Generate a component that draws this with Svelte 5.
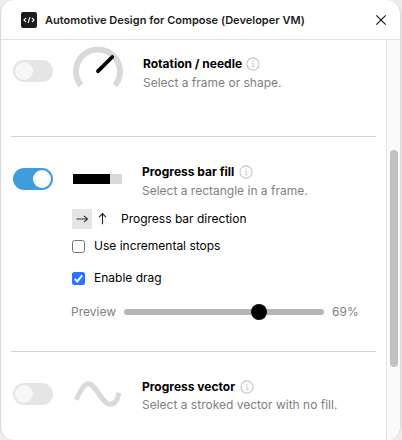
<script>
  let stops = $state(false);
  let drag = $state(true);
  let preview = $state(69);
</script>

{#snippet info()}
  <svg class="info" width="14" height="14" viewBox="0 0 14 14" fill="none">
    <circle cx="7" cy="7" r="6.1" stroke="#c6c6c6" stroke-width="1.1" />
    <path d="M5.8 6.5h1.4v3.3M5.7 9.8h2.8" stroke="#c6c6c6" stroke-width="0.9" />
    <rect x="6.4" y="3.7" width="1.2" height="1.2" fill="#c6c6c6" />
  </svg>
{/snippet}

<main class="window">
  <header>
    <svg class="logo" width="16" height="16" viewBox="0 0 16 16" fill="none">
      <rect width="16" height="16" rx="2" fill="#1c1c1c" />
      <path d="M5.1 5.8 2.9 8l2.2 2.2M10.9 5.8 13.1 8l-2.2 2.2M8.9 5.2 7.1 10.8" stroke="#fff" stroke-width="1.1" />
    </svg>
    <h1>Automotive Design for Compose (Developer VM)</h1>
    <svg class="close" width="12" height="12" viewBox="0 0 12 12" fill="none">
      <path d="m1.3 1.3 9.4 9.4m0-9.4-9.4 9.4" stroke="#111" stroke-width="1.15" />
    </svg>
  </header>
  <div class="body">
    <div class="content">
      <section class="rotation">
        <div class="toggle"><span></span></div>
        <svg class="art" width="52" height="44" viewBox="0 0 52 44" fill="none">
          <path d="M9 39.4A22 22 0 1 1 43 39.4" stroke="#d9d9d9" stroke-width="6" />
          <path d="M26 25.2 40.3 11" stroke="#000" stroke-width="3.8" stroke-linecap="round" />
        </svg>
        <div class="copy">
          <h2>Rotation / needle{@render info()}</h2>
          <p>Select a frame or shape.</p>
        </div>
      </section>
      <section class="progress">
        <div class="top">
          <div class="toggle on"><span></span></div>
          <div class="bar"><i></i></div>
          <div class="copy">
            <h2>Progress bar fill{@render info()}</h2>
            <p>Select a rectangle in a frame.</p>
          </div>
        </div>
        <div class="direction">
          <span class="right">
            <svg width="20" height="20" viewBox="0 0 20 20" fill="none"><path d="M4.5 10h11M12 6.8l3.5 3.2-3.5 3.2" stroke="#333" stroke-width="1.1" /></svg>
          </span>
          <svg class="up" width="20" height="20" viewBox="0 0 20 20" fill="none"><path d="M10.5 15.2V4.7M7.1 8.1l3.4-3.5 3.4 3.5" stroke="#222" stroke-width="1.1" /></svg>
          <span class="label">Progress bar direction</span>
        </div>
        <label class="stops"><input type="checkbox" bind:checked={stops} /><span class="box"></span>Use incremental stops</label>
        <label class="drag"><input type="checkbox" bind:checked={drag} /><span class="box"><svg width="13" height="13" viewBox="0 0 13 13" fill="none"><path d="m2.7 6.9 2.5 2.5 5-6" stroke="#fff" stroke-width="2" /></svg></span>Enable drag</label>
        <div class="preview">
          <span class="name">Preview</span>
          <div class="slider"><b style="left: {(preview / 100) * 184 - 0.2}px"></b></div>
          <span class="value">{preview}%</span>
        </div>
      </section>
      <section class="vector">
        <div class="toggle"><span></span></div>
        <svg class="art" width="52" height="30" viewBox="0 0 52 30" fill="none">
          <path d="M4.3 20.9C8 12 12.2 4.7 16.3 4.7C24 4.7 29.5 25.2 38.5 25.2C43 25.2 45.8 20 46.9 13.8" stroke="#d9d9d9" stroke-width="5" />
        </svg>
        <div class="copy">
          <h2>Progress vector{@render info()}</h2>
          <p>Select a stroked vector with no fill.</p>
        </div>
      </section>
    </div>
    <div class="track"><div class="thumb"></div></div>
  </div>
</main>

<style>
  :global(body) { margin: 0; background: #ececec; overflow: hidden; }
  * { box-sizing: border-box; }
  .window {
    width: 401px; height: 440px; border: solid #d8d8d8; border-width: 0 1px;
    border-radius: 14px; overflow: hidden; background: #fff; color: #000;
    font: 12px/16px Inter, sans-serif; display: flex; flex-direction: column;
  }
  header { height: 40px; flex: none; display: flex; align-items: center; border-bottom: 1px solid #e2e2e2; padding: 1px 13px 0 20px; }
  h1 { margin: 0 0 0 8px; flex: 1; font-size: 11px; line-height: 16px; font-weight: 600; color: #1c1c1c; white-space: nowrap; letter-spacing: 0.02px; }
  .body { flex: 1; display: flex; min-height: 0; }
  .content { flex: 1; padding: 0 10px; overflow: hidden; }
  .track { width: 14px; border-left: 1px solid #e5e5e5; background: #fafafa; padding: 110px 2px 0 3px; }
  .thumb { width: 8px; height: 217px; border-radius: 4px; background: #c1c1c1; }
  section { padding-left: 2px; }
  .rotation, .vector, .top { display: flex; align-items: flex-start; }
  .rotation { height: 97px; border-bottom: 1px solid #d4d4d4; }
  .toggle { width: 40px; height: 22px; border-radius: 11px; padding: 2px; background: #e5e5e5; flex: none; }
  .toggle span { display: block; width: 18px; height: 18px; border-radius: 50%; background: #f7f7f7; }
  .toggle.on { background: #409ddd; }
  .toggle.on span { background: #fff; margin-left: 18px; }
  .rotation .toggle { margin-top: 20px; }
  .rotation .art { margin: 6px 0 0 19px; }
  .copy { white-space: nowrap; }
  .rotation .copy { margin: 15px 0 0 19px; }
  h2 { margin: 0; height: 17px; font-size: 12px; line-height: 17px; font-weight: 700; display: flex; align-items: center; gap: 5px; }
  .rotation h2 { gap: 4px; }
  p { margin: 2px 0 0; height: 17px; line-height: 17px; color: #808080; }
  .progress { height: 215px; border-bottom: 1px solid #d4d4d4; padding-top: 26px; }
  .top { height: 46px; }
  .progress .toggle { margin-top: 5px; }
  .bar { width: 49px; height: 10px; margin: 11px 0 0 20px; background: #d9d9d9; }
  .bar i { display: block; width: 37px; height: 10px; background: #000; }
  .top .copy { margin-left: 20px; }
  .direction { display: flex; height: 20px; margin-left: 59px; line-height: 20px; }
  .right { width: 20px; height: 20px; background: #e5e5e5; }
  .right svg { display: block; }
  .label { margin-left: 9px; }
  label { display: flex; align-items: center; height: 18px; margin-left: 59px; gap: 9px; }
  input { position: absolute; opacity: 0; width: 0; height: 0; margin: 0; }
  .box { width: 13px; height: 13px; border: 1px solid #767676; border-radius: 2.5px; }
  .box svg { display: block; }
  input:checked + .box { border: 0; background: #2974ff; }
  .stops { margin-top: 8px; }
  .drag { margin-top: 14px; }
  .preview { height: 18px; display: flex; align-items: center; margin: 16px 0 0 58px; color: #808080; }
  .name { width: 53px; }
  .slider { width: 200px; height: 6px; border-radius: 3px; background: #b5b5b5; position: relative; }
  .slider b { position: absolute; top: -5px; width: 16px; height: 16px; border-radius: 50%; background: #000; }
  .value { margin-left: 8px; }
  .vector .toggle { margin-top: 31px; }
  .vector .art { margin: 27px 0 0 19px; }
  .vector .copy { margin: 26px 0 0 18px; }
  .vector p { margin-top: 1px; }
</style>
